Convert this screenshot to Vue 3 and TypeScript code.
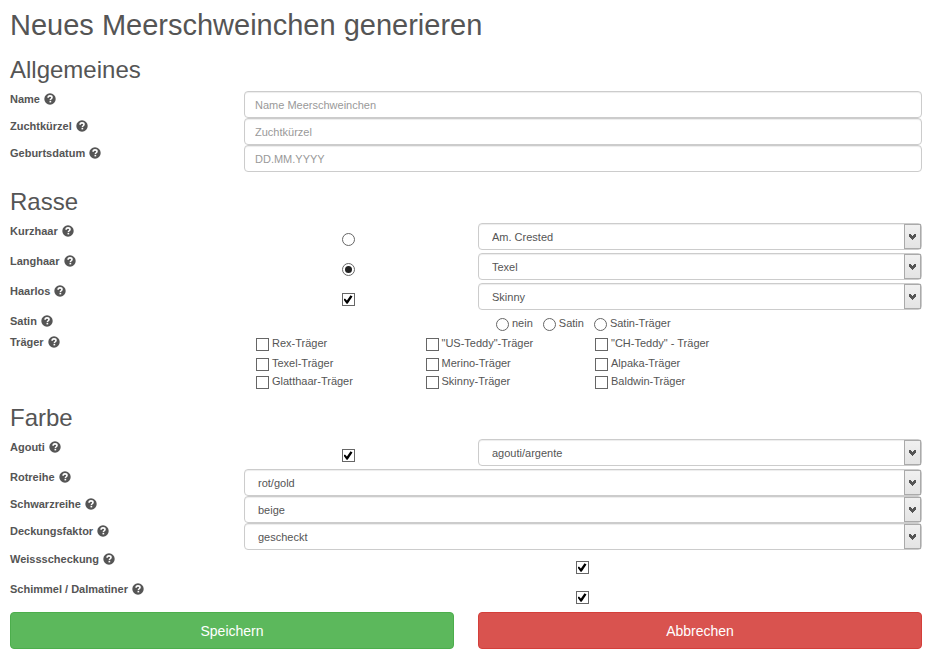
<script setup lang="ts">
import { reactive } from 'vue'

interface TextField {
  id: 'name' | 'kuerzel' | 'geburtsdatum'
  label: string
  placeholder: string
}

interface BreedField {
  id: 'kurzhaar' | 'langhaar' | 'haarlos'
  label: string
  type: 'radio' | 'checkbox'
  options: string[]
}

interface ColourField {
  id: 'rotreihe' | 'schwarzreihe' | 'deckungsfaktor'
  label: string
  options: string[]
}

const textFields: TextField[] = [
  { id: 'name', label: 'Name', placeholder: 'Name Meerschweinchen' },
  { id: 'kuerzel', label: 'Zuchtkürzel', placeholder: 'Zuchtkürzel' },
  { id: 'geburtsdatum', label: 'Geburtsdatum', placeholder: 'DD.MM.YYYY' },
]

const breedFields: BreedField[] = [
  { id: 'kurzhaar', label: 'Kurzhaar', type: 'radio', options: ['Am. Crested'] },
  { id: 'langhaar', label: 'Langhaar', type: 'radio', options: ['Texel'] },
  { id: 'haarlos', label: 'Haarlos', type: 'checkbox', options: ['Skinny'] },
]

const satinOptions = ['nein', 'Satin', 'Satin-Träger']

const carriers = [
  'Rex-Träger', '"US-Teddy"-Träger', '"CH-Teddy" - Träger',
  'Texel-Träger', 'Merino-Träger', 'Alpaka-Träger',
  'Glatthaar-Träger', 'Skinny-Träger', 'Baldwin-Träger',
]

const colourFields: ColourField[] = [
  { id: 'rotreihe', label: 'Rotreihe', options: ['rot/gold'] },
  { id: 'schwarzreihe', label: 'Schwarzreihe', options: ['beige'] },
  { id: 'deckungsfaktor', label: 'Deckungsfaktor', options: ['gescheckt'] },
]

const patternFields = [
  { id: 'weissscheckung', label: 'Weissscheckung' },
  { id: 'schimmel', label: 'Schimmel / Dalmatiner' },
] as const

const form = reactive({
  name: '',
  kuerzel: '',
  geburtsdatum: '',
  haar: 'langhaar',
  haarlosAktiv: true,
  kurzhaar: 'Am. Crested',
  langhaar: 'Texel',
  haarlos: 'Skinny',
  satin: '',
  traeger: [] as string[],
  agoutiAktiv: true,
  agouti: 'agouti/argente',
  rotreihe: 'rot/gold',
  schwarzreihe: 'beige',
  deckungsfaktor: 'gescheckt',
  weissscheckung: true,
  schimmel: true,
})
</script>

<template>
  <svg class="symbols" aria-hidden="true">
    <symbol id="help" viewBox="0 0 12 12">
      <circle cx="6" cy="6" r="5.7" fill="#555" />
      <path d="M4.1 4.8C4.1 3.5 4.9 2.9 6 2.9s2 .6 2 1.6c0 1.2-1.6 1.3-1.6 2.5" fill="none" stroke="#fff" stroke-width="1.6" />
      <path d="M5.5 7.8h1.7v1.6H5.5z" fill="#fff" />
    </symbol>
    <symbol id="arrow" viewBox="0 0 7 6">
      <path d="M0 0h2v1h1v1h1V1h1V0h2v3H6v1H5v1H4v1H3V5H2V4H1V3H0z" fill="#555" />
    </symbol>
  </svg>

  <main class="page">
    <form @submit.prevent>
      <h1>Neues Meerschweinchen generieren</h1>

      <section>
        <h2>Allgemeines</h2>
        <div v-for="f in textFields" :key="f.id" class="row">
          <label class="caption" :for="f.id">{{ f.label }} <svg class="help"><use href="#help" /></svg></label>
          <input :id="f.id" v-model="form[f.id]" class="control wide" type="text" :placeholder="f.placeholder" />
        </div>
      </section>

      <section>
        <h2>Rasse</h2>
        <div v-for="f in breedFields" :key="f.id" class="row spaced">
          <label class="caption" :for="f.id">{{ f.label }} <svg class="help"><use href="#help" /></svg></label>
          <div class="toggle">
            <input v-if="f.type === 'radio'" v-model="form.haar" type="radio" name="haar" :value="f.id" :aria-label="f.label" />
            <input v-else v-model="form.haarlosAktiv" type="checkbox" :aria-label="f.label" />
          </div>
          <div class="select half">
            <select :id="f.id" v-model="form[f.id]" class="control">
              <option v-for="o in f.options" :key="o">{{ o }}</option>
            </select>
            <span class="drop"><svg><use href="#arrow" /></svg></span>
          </div>
        </div>
        <div class="row satin" role="radiogroup" aria-labelledby="satin-caption">
          <span id="satin-caption" class="caption">Satin <svg class="help"><use href="#help" /></svg></span>
          <div class="satin-options">
            <label v-for="s in satinOptions" :key="s" class="choice">
              <input v-model="form.satin" type="radio" name="satin" :value="s" />{{ s }}
            </label>
          </div>
        </div>
        <div class="row" role="group" aria-labelledby="traeger-caption">
          <span id="traeger-caption" class="caption">Träger <svg class="help"><use href="#help" /></svg></span>
          <div class="carriers wide">
            <label v-for="c in carriers" :key="c" class="choice">
              <input v-model="form.traeger" type="checkbox" :value="c" />{{ c }}
            </label>
          </div>
        </div>
      </section>

      <section>
        <h2>Farbe</h2>
        <div class="row spaced">
          <label class="caption" for="agouti">Agouti <svg class="help"><use href="#help" /></svg></label>
          <div class="toggle">
            <input v-model="form.agoutiAktiv" type="checkbox" aria-label="Agouti" />
          </div>
          <div class="select half">
            <select id="agouti" v-model="form.agouti" class="control">
              <option>agouti/argente</option>
            </select>
            <span class="drop"><svg><use href="#arrow" /></svg></span>
          </div>
        </div>
        <div class="colours">
          <div v-for="f in colourFields" :key="f.id" class="row">
            <label class="caption" :for="f.id">{{ f.label }} <svg class="help"><use href="#help" /></svg></label>
            <div class="select wide">
              <select :id="f.id" v-model="form[f.id]" class="control">
                <option v-for="o in f.options" :key="o">{{ o }}</option>
              </select>
              <span class="drop"><svg><use href="#arrow" /></svg></span>
            </div>
          </div>
        </div>
        <div v-for="f in patternFields" :key="f.id" class="row spaced">
          <label class="caption" :for="f.id">{{ f.label }} <svg class="help"><use href="#help" /></svg></label>
          <div class="toggle wide">
            <input :id="f.id" v-model="form[f.id]" type="checkbox" />
          </div>
        </div>
      </section>

      <div class="actions">
        <button class="save" type="submit">Speichern</button>
        <button class="cancel" type="button">Abbrechen</button>
      </div>
    </form>
  </main>
</template>

<style>
body {
  background: #fff;
}
</style>

<style scoped>
.symbols {
  position: absolute;
  width: 0;
  height: 0;
}

.page {
  padding: 9px 27px 0 10px;
  color: #555;
  font: 11px/16px "Liberation Sans", Arial, sans-serif;
}

h1,
h2 {
  margin: 0;
  font-weight: 400;
}

h1 {
  font-size: 29px;
  line-height: 32px;
}

h2 {
  margin-bottom: 8px;
  font-size: 24px;
  line-height: 26px;
}

section {
  padding-top: 16px;
}

section + section {
  padding-top: 17px;
}

.row {
  display: grid;
  grid-template-columns: repeat(4, minmax(0, 1fr));
  column-gap: 24px;
  align-items: start;
}

.spaced {
  min-height: 30px;
}

.caption {
  display: flex;
  align-items: center;
  gap: 4px;
  font-weight: 700;
  white-space: nowrap;
}

.help {
  width: 12px;
  height: 12px;
}

.wide {
  grid-column: 2 / -1;
}

.half {
  grid-column: 3 / -1;
}

.control {
  box-sizing: border-box;
  width: 100%;
  height: 27px;
  margin: 0;
  padding: 0 10px;
  border: 1px solid #ccc;
  border-radius: 4px;
  background: #fff;
  box-shadow: inset 0 1px 1px rgba(0, 0, 0, 0.075);
  color: #555;
  font: inherit;
}

.control::placeholder {
  color: #999;
  opacity: 1;
}

.select {
  position: relative;
}

.select .control {
  display: block;
  padding: 0 30px 0 13px;
  appearance: none;
}

.drop {
  position: absolute;
  top: 1px;
  right: 1px;
  bottom: 1px;
  box-sizing: border-box;
  width: 17px;
  display: flex;
  align-items: center;
  justify-content: center;
  border: 1px solid #aaa;
  background: linear-gradient(#f0f0f0, #e4e4e4);
  pointer-events: none;
}

.drop svg {
  width: 7px;
  height: 6px;
  padding-top: 1px;
}

.toggle {
  display: flex;
  justify-content: center;
  padding: 10px 2px 0 0;
}

input[type='radio'],
input[type='checkbox'] {
  box-sizing: border-box;
  flex: none;
  display: grid;
  place-items: center;
  width: 13px;
  height: 13px;
  margin: 0;
  border: 1px solid #666;
  background: #fff;
  appearance: none;
}

input[type='radio'] {
  border-radius: 50%;
}

input[type='radio']:checked::before {
  content: '';
  width: 7px;
  height: 7px;
  border-radius: 50%;
  background: #222;
}

input[type='checkbox']:checked::before {
  content: '';
  width: 9px;
  height: 9px;
  background: #000;
  clip-path: polygon(0 50%, 16% 38%, 38% 60%, 78% 4%, 100% 16%, 46% 96%, 34% 96%);
}

.satin {
  min-height: 21px;
}

.satin-options {
  grid-column: 3 / -1;
  display: flex;
  gap: 10px;
  padding: 2px 18px 0;
}

.choice {
  display: flex;
  align-items: flex-start;
  gap: 3px;
  white-space: nowrap;
}

.choice input {
  margin-top: 3px;
}

.carriers {
  display: grid;
  grid-template-columns: repeat(3, minmax(0, 1fr));
  grid-template-rows: 20px 18px 15px;
  padding: 1px 25% 0 0;
}

.carriers .choice {
  padding-left: 12px;
}

.colours {
  padding-bottom: 1px;
}

.actions {
  display: grid;
  grid-template-columns: 1fr 1fr;
  gap: 24px;
  padding-top: 1px;
}

button {
  height: 37px;
  border: 1px solid;
  border-radius: 4px;
  color: #fff;
  font: 14px/20px "Liberation Sans", Arial, sans-serif;
}

.save {
  border-color: #4cae4c;
  background: #5cb85c;
}

.cancel {
  border-color: #d43f3a;
  background: #d9534f;
}
</style>
